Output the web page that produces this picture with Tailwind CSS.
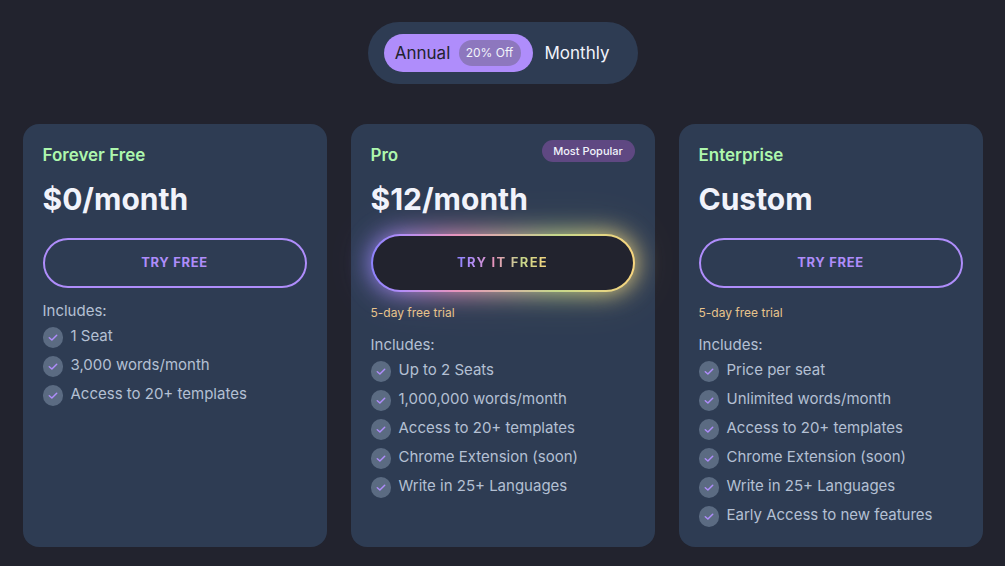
<!DOCTYPE html>
<html lang="en">
<head>
  <meta charset="UTF-8" />
  <meta name="viewport" content="width=device-width, initial-scale=1.0" />
  <title>Pricing</title>
  <script src="https://cdn.jsdelivr.net/npm/@tailwindcss/browser@4"></script>
</head>
<body class="bg-[#22232e] font-['Inter',sans-serif] text-[#b4c0d3]">
  <!-- check icon shared by all the feature lists -->
  <svg class="hidden">
    <symbol id="check" viewBox="0 0 20 21">
      <path d="M6.3 10.8 L8.9 13 L13.7 8.3" fill="none" stroke="#af8dfb" stroke-width="1.5" stroke-linecap="round" stroke-linejoin="round" />
    </symbol>
  </svg>

  <main class="mx-auto max-w-[960px] pt-[22px] pb-[19px]">
    <div class="mx-auto flex h-[62px] w-[270px] items-center rounded-full bg-[#2e3c53] px-4">
      <button class="flex h-[38px] items-center gap-2 rounded-full bg-[#af8dfb] pr-3 pl-[11px] text-[#22232e]">
        <span class="w-14 text-[17px] leading-6 whitespace-nowrap">Annual</span>
        <span class="flex h-[26px] w-[62px] items-center justify-center rounded-full bg-[#8d77be] text-xs whitespace-nowrap text-[#f1f3fb]">20% Off</span>
      </button>
      <button class="ml-3 text-[17px] leading-6 text-[#f1f3fb]">Monthly</button>
    </div>

    <div class="mt-10 grid grid-cols-3 gap-6">
      <section class="h-full rounded-2xl bg-[#2e3c53] px-5 pt-5 pb-5">
        <h2 class="h-6 text-[17px] leading-[22px] font-semibold text-[#adf7ad]">Forever Free</h2>
        <p class="mt-3 text-3xl leading-[38px] font-bold text-[#f1f3fb]">$0/month</p>
        <div class="mt-[14px] flex h-[62px] items-center">
          <button class="h-[50px] w-full rounded-full border-2 border-[#af8dfb] text-[13px] font-bold tracking-wider text-[#af8dfb]">TRY FREE</button>
        </div>
        <p class="mt-[7px] text-[15px] leading-5">Includes:</p>
        <ul class="mt-[6px] space-y-2 text-[15px] leading-[18px]">
          <li class="flex gap-2"><svg class="h-[21px] w-5 rounded-full bg-[#5b6b82]"><use href="#check" /></svg>1 Seat</li>
          <li class="flex gap-2"><svg class="h-[21px] w-5 rounded-full bg-[#5b6b82]"><use href="#check" /></svg>3,000 words/month</li>
          <li class="flex gap-2"><svg class="h-[21px] w-5 rounded-full bg-[#5b6b82]"><use href="#check" /></svg>Access to 20+ templates</li>
        </ul>
      </section>

      <section class="relative h-full rounded-2xl bg-[#2e3c53] px-5 pt-5 pb-5">
        <span class="absolute top-4 right-5 flex h-[22px] w-[93px] items-center justify-center rounded-full bg-[#5f4882] text-[11px] font-medium whitespace-nowrap text-[#f1f3fb]">Most Popular</span>
        <h2 class="h-6 text-[17px] leading-[22px] font-semibold text-[#adf7ad]">Pro</h2>
        <p class="relative z-10 mt-3 text-3xl leading-[38px] font-bold text-[#f1f3fb]">$12/month</p>
        <div class="relative mt-[14px] flex h-[62px] items-center">
          <!-- glow behind the button: a tight halo and a wide faint one -->
          <div class="absolute inset-x-0 top-[2px] h-[58px] rounded-full bg-[linear-gradient(90deg,#8c82fc_0%,#e794bd_32%,#c5d78b_70%,#f8d57e_100%)] blur-[12px]"></div>
          <div class="absolute inset-x-0 top-[2px] h-[58px] rounded-full bg-[linear-gradient(90deg,#8c82fc_0%,#e794bd_32%,#c5d78b_70%,#f8d57e_100%)] opacity-20 blur-[24px]"></div>
          <button class="relative h-[58px] w-full rounded-full bg-[linear-gradient(90deg,#8c82fc_0%,#af8dfb_10%,#e794bd_32%,#c5d78b_70%,#f8d57e_100%)] p-[2px] text-[13px] font-bold tracking-widest">
            <span class="flex h-full items-center justify-center rounded-full bg-[#22232e]"><span class="bg-[linear-gradient(90deg,#8c82fc_0%,#af8dfb_15%,#e794bd_40%,#c5d78b_70%,#f8d57e_100%)] bg-clip-text text-transparent">TRY IT FREE</span></span>
          </button>
        </div>
        <p class="relative z-10 mt-[11px] text-xs leading-4 text-[#e8c48c]">5-day free trial</p>
        <p class="mt-[14px] text-[15px] leading-5">Includes:</p>
        <ul class="mt-[6px] space-y-2 text-[15px] leading-[18px]">
          <li class="flex gap-2"><svg class="h-[21px] w-5 rounded-full bg-[#5b6b82]"><use href="#check" /></svg>Up to 2 Seats</li>
          <li class="flex gap-2"><svg class="h-[21px] w-5 rounded-full bg-[#5b6b82]"><use href="#check" /></svg>1,000,000 words/month</li>
          <li class="flex gap-2"><svg class="h-[21px] w-5 rounded-full bg-[#5b6b82]"><use href="#check" /></svg>Access to 20+ templates</li>
          <li class="flex gap-2"><svg class="h-[21px] w-5 rounded-full bg-[#5b6b82]"><use href="#check" /></svg>Chrome Extension (soon)</li>
          <li class="flex gap-2"><svg class="h-[21px] w-5 rounded-full bg-[#5b6b82]"><use href="#check" /></svg>Write in 25+ Languages</li>
        </ul>
      </section>

      <section class="h-full rounded-2xl bg-[#2e3c53] px-5 pt-5 pb-5">
        <h2 class="h-6 text-[17px] leading-[22px] font-semibold text-[#adf7ad]">Enterprise</h2>
        <p class="mt-3 text-3xl leading-[38px] font-bold text-[#f1f3fb]">Custom</p>
        <div class="mt-[14px] flex h-[62px] items-center">
          <button class="h-[50px] w-full rounded-full border-2 border-[#af8dfb] text-[13px] font-bold tracking-wider text-[#af8dfb]">TRY FREE</button>
        </div>
        <p class="mt-[11px] text-xs leading-4 text-[#e8c48c]">5-day free trial</p>
        <p class="mt-[14px] text-[15px] leading-5">Includes:</p>
        <ul class="mt-[6px] space-y-2 text-[15px] leading-[18px]">
          <li class="flex gap-2"><svg class="h-[21px] w-5 rounded-full bg-[#5b6b82]"><use href="#check" /></svg>Price per seat</li>
          <li class="flex gap-2"><svg class="h-[21px] w-5 rounded-full bg-[#5b6b82]"><use href="#check" /></svg>Unlimited words/month</li>
          <li class="flex gap-2"><svg class="h-[21px] w-5 rounded-full bg-[#5b6b82]"><use href="#check" /></svg>Access to 20+ templates</li>
          <li class="flex gap-2"><svg class="h-[21px] w-5 rounded-full bg-[#5b6b82]"><use href="#check" /></svg>Chrome Extension (soon)</li>
          <li class="flex gap-2"><svg class="h-[21px] w-5 rounded-full bg-[#5b6b82]"><use href="#check" /></svg>Write in 25+ Languages</li>
          <li class="flex gap-2"><svg class="h-[21px] w-5 rounded-full bg-[#5b6b82]"><use href="#check" /></svg>Early Access to new features</li>
        </ul>
      </section>
    </div>
  </main>
</body>
</html>
